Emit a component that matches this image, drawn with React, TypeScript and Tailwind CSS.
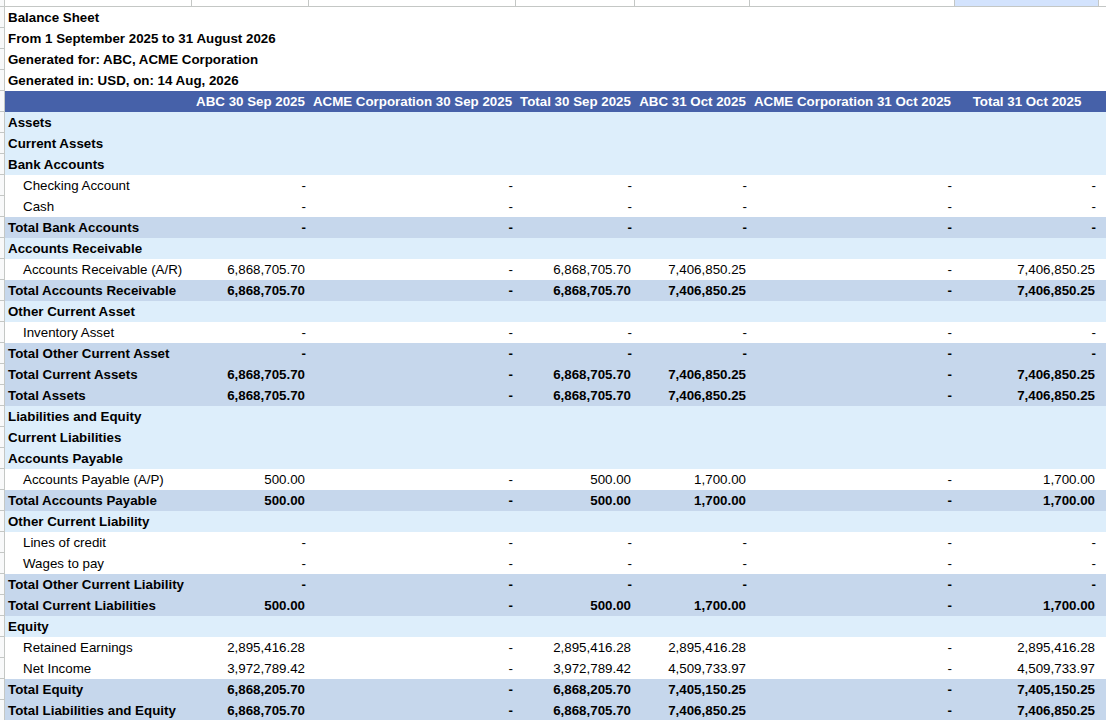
import React from 'react';

type Kind = 'section' | 'item' | 'total';
type Row = { label: string; kind: Kind; values?: string[] };

const D = ['-', '-', '-', '-', '-', '-'];
const AR = ['6,868,705.70', '-', '6,868,705.70', '7,406,850.25', '-', '7,406,850.25'];
const AP = ['500.00', '-', '500.00', '1,700.00', '-', '1,700.00'];

const rows: Row[] = [
  { label: 'Assets', kind: 'section' },
  { label: 'Current Assets', kind: 'section' },
  { label: 'Bank Accounts', kind: 'section' },
  { label: 'Checking Account', kind: 'item', values: D },
  { label: 'Cash', kind: 'item', values: D },
  { label: 'Total Bank Accounts', kind: 'total', values: D },
  { label: 'Accounts Receivable', kind: 'section' },
  { label: 'Accounts Receivable (A/R)', kind: 'item', values: AR },
  { label: 'Total Accounts Receivable', kind: 'total', values: AR },
  { label: 'Other Current Asset', kind: 'section' },
  { label: 'Inventory Asset', kind: 'item', values: D },
  { label: 'Total Other Current Asset', kind: 'total', values: D },
  { label: 'Total Current Assets', kind: 'total', values: AR },
  { label: 'Total Assets', kind: 'total', values: AR },
  { label: 'Liabilities and Equity', kind: 'section' },
  { label: 'Current Liabilities', kind: 'section' },
  { label: 'Accounts Payable', kind: 'section' },
  { label: 'Accounts Payable (A/P)', kind: 'item', values: AP },
  { label: 'Total Accounts Payable', kind: 'total', values: AP },
  { label: 'Other Current Liability', kind: 'section' },
  { label: 'Lines of credit', kind: 'item', values: D },
  { label: 'Wages to pay', kind: 'item', values: D },
  { label: 'Total Other Current Liability', kind: 'total', values: D },
  { label: 'Total Current Liabilities', kind: 'total', values: AP },
  { label: 'Equity', kind: 'section' },
  { label: 'Retained Earnings', kind: 'item', values: ['2,895,416.28', '-', '2,895,416.28', '2,895,416.28', '-', '2,895,416.28'] },
  { label: 'Net Income', kind: 'item', values: ['3,972,789.42', '-', '3,972,789.42', '4,509,733.97', '-', '4,509,733.97'] },
  { label: 'Total Equity', kind: 'total', values: ['6,868,205.70', '-', '6,868,205.70', '7,405,150.25', '-', '7,405,150.25'] },
  { label: 'Total Liabilities and Equity', kind: 'total', values: AR },
];

const headers = [
  'ABC 30 Sep 2025',
  'ACME Corporation 30 Sep 2025',
  'Total 30 Sep 2025',
  'ABC 31 Oct 2025',
  'ACME Corporation 31 Oct 2025',
  'Total 31 Oct 2025',
];

const titles = [
  'Balance Sheet',
  'From 1 September 2025 to 31 August 2026',
  'Generated for: ABC, ACME Corporation',
  'Generated in: USD, on: 14 Aug, 2026',
];

const cols = 'grid grid-cols-[5px_187px_117px_207px_119px_115px_205px_144px_1fr]';

function RowHead() {
  return <div className="h-full border-r border-b border-[#c4c7c5] bg-[#f8f9fa]" />;
}

function App() {
  return (
    <div
      className="w-[1106px] h-[720px] overflow-hidden bg-white text-[13.33px] text-black"
      style={{ fontFamily: '"Liberation Sans", Arial, sans-serif' }}
    >
      {/* column header strip (cut off) */}
      <div className={`${cols} h-[7px] border-b border-[#c4c7c5]`}>
        <div className="border-r border-[#c4c7c5] bg-[#f8f9fa]" />
        <div className="border-r border-[#c4c7c5]" />
        <div className="border-r border-[#c4c7c5]" />
        <div className="border-r border-[#c4c7c5]" />
        <div className="border-r border-[#c4c7c5]" />
        <div className="border-r border-[#c4c7c5]" />
        <div className="border-r border-[#c4c7c5]" />
        <div className="border-r border-[#c4c7c5] bg-[#d3e3fd]" />
        <div />
      </div>

      {titles.map((t) => (
        <div key={t} className={`${cols} h-[21px]`}>
          <RowHead />
          <div className="col-span-8 pl-[3px] font-bold leading-[21px] whitespace-nowrap">{t}</div>
        </div>
      ))}

      <div className={`${cols} h-[21px]`}>
        <RowHead />
        <div className="bg-[#4661a9]" />
        {headers.map((h) => (
          <div key={h} className="bg-[#4661a9] text-white font-bold text-center leading-[21px] whitespace-nowrap">
            {h}
          </div>
        ))}
        <div className="bg-[#4661a9]" />
      </div>

      {rows.map((r) => {
        const bg = r.kind === 'section' ? 'bg-[#ddeefb]' : r.kind === 'total' ? 'bg-[#c6d7ec]' : 'bg-white';
        const bold = r.kind === 'item' ? '' : 'font-bold';
        return (
          <div key={r.label} className={`${cols} h-[21px] ${bg}`}>
            <RowHead />
            <div className={`${r.kind === 'item' ? 'pl-[18px]' : 'pl-[3px]'} ${bold} leading-[21px] whitespace-nowrap`}>
              {r.label}
            </div>
            {(r.values ?? ['', '', '', '', '', '']).map((v, i) => (
              <div key={i} className={`text-right leading-[21px] whitespace-nowrap ${bold} ${v === '-' ? 'pr-[3px]' : 'pr-[4px]'}`}>
                {v}
              </div>
            ))}
            <div />
          </div>
        );
      })}
    </div>
  );
}

export default App;
